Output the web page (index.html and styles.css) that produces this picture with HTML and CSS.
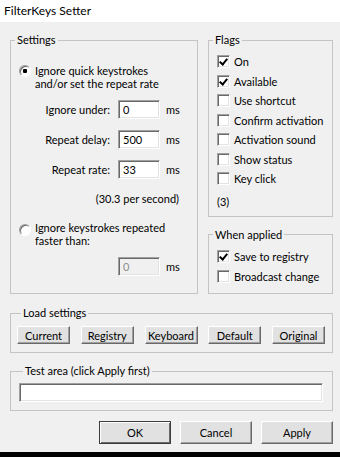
FILE: index.html
```html
<!DOCTYPE html>
<html lang="en">
<head>
    <meta charset="UTF-8">
    <title>FilterKeys Setter</title>
    <link rel="stylesheet" href="styles.css">
</head>
<body>
    <div class="titlebar">FilterKeys Setter</div>

    <div class="dialog">
        <div class="top">
            <fieldset class="group settings">
                <legend>Settings</legend>

                <div class="radio-row first">
                    <span class="radio on"></span>
                    <div class="radio-text">
                        <span class="line">Ignore quick keystrokes</span>
                        <span class="line">and/or set the repeat rate</span>
                    </div>
                </div>

                <div class="field-row under">
                    <span class="field-label">Ignore under:</span>
                    <input class="textbox" type="text" value="0">
                    <span>ms</span>
                </div>
                <div class="field-row">
                    <span class="field-label">Repeat delay:</span>
                    <input class="textbox" type="text" value="500">
                    <span>ms</span>
                </div>
                <div class="field-row">
                    <span class="field-label">Repeat rate:</span>
                    <input class="textbox" type="text" value="33">
                    <span>ms</span>
                </div>

                <div class="rate">(30.3 per second)</div>

                <div class="radio-row second">
                    <span class="radio"></span>
                    <div class="radio-text">
                        <span class="line">Ignore keystrokes repeated</span>
                        <span class="line">faster than:</span>
                    </div>
                </div>

                <div class="field-row bounce">
                    <span class="field-label"></span>
                    <input class="textbox" type="text" value="0" disabled>
                    <span>ms</span>
                </div>
            </fieldset>

            <div class="side">
                <fieldset class="group flags">
                    <legend>Flags</legend>
                    <div class="checks">
                        <div class="check"><span class="box on"></span>On</div>
                        <div class="check"><span class="box on"></span>Available</div>
                        <div class="check"><span class="box"></span>Use shortcut</div>
                        <div class="check"><span class="box"></span>Confirm activation</div>
                        <div class="check"><span class="box"></span>Activation sound</div>
                        <div class="check"><span class="box"></span>Show status</div>
                        <div class="check"><span class="box"></span>Key click</div>
                    </div>
                    <div class="count">(3)</div>
                </fieldset>

                <fieldset class="group applied">
                    <legend>When applied</legend>
                    <div class="check"><span class="box on"></span>Save to registry</div>
                    <div class="check"><span class="box"></span>Broadcast change</div>
                </fieldset>
            </div>
        </div>

        <fieldset class="group load">
            <legend>Load settings</legend>
            <div class="load-buttons">
                <button class="btn">Current</button>
                <button class="btn">Registry</button>
                <button class="btn">Keyboard</button>
                <button class="btn">Default</button>
                <button class="btn">Original</button>
            </div>
        </fieldset>

        <fieldset class="group test">
            <legend>Test area (click Apply first)</legend>
            <input class="textbox test-input" type="text">
        </fieldset>

        <div class="actions">
            <button class="btn big default">OK</button>
            <button class="btn big">Cancel</button>
            <button class="btn big">Apply</button>
        </div>
    </div>

    <div class="taskbar"></div>
</body>
</html>
```

FILE: styles.css
```css
body {
    margin: 0;
    width: 340px;
    height: 457px;
    overflow: hidden;
    display: flex;
    flex-direction: column;
    background-color: #f0f0f0;
    color: #000000;
    font-family: 'Lato', sans-serif;
    font-size: 11px;
}

.titlebar {
    height: 22px;
    line-height: 21px;
    padding-left: 4px;
    background-color: #ffffff;
    font-size: 12px;
}

.dialog {
    flex: 1;
    padding: 11px 7px 0 10px;
}

.top {
    display: flex;
    gap: 10px;
}

/* group boxes */
.group {
    margin: 0;
    padding: 0;
    min-width: 0;
    border: 1px solid #c4c4c4;
}
.group legend {
    margin-left: 4px;
    padding: 0 2px;
    line-height: 14px;
}

.settings {
    width: 188px;
    box-sizing: border-box;
    padding-bottom: 17px;
}
.side {
    width: 125px;
    display: flex;
    flex-direction: column;
    gap: 11px;
}

/* radio buttons */
.radio-row {
    display: flex;
    align-items: flex-start;
    gap: 4px;
    padding-left: 8px;
}
.radio-row.first {
    margin-top: 17px;
}
.radio-row.second {
    margin-top: 15px;
}
.radio-text .line {
    display: block;
    height: 13px;
    line-height: 13px;
}
.radio {
    width: 12px;
    height: 12px;
    box-sizing: border-box;
    border-radius: 50%;
    border: 1px solid #9a9a9a;
    border-bottom-color: #ffffff;
    border-right-color: #ffffff;
    box-shadow: inset 1px 1px 0 #6a6a6a;
    background: #ffffff;
    flex-shrink: 0;
}
.radio-row.first .radio {
    margin-top: 1px;
}
.radio-row.second .radio {
    margin-top: 3px;
}
.radio.on {
    background: radial-gradient(circle, #000000 0, #000000 2px, #ffffff 2.5px);
}

/* edit fields */
.field-row {
    display: flex;
    align-items: center;
    height: 19px;
    margin-top: 11px;
}
.field-row.under,
.field-row.bounce {
    margin-top: 10px;
}
.field-label {
    width: 99px;
    margin-right: 8px;
    text-align: right;
}
.textbox {
    box-sizing: border-box;
    width: 42px;
    height: 19px;
    margin: 0 6px 0 0;
    padding: 0 0 0 4px;
    font: inherit;
    color: #000000;
    background: #ffffff;
    border: 1px solid #a0a0a0;
    border-bottom-color: #ffffff;
    border-right-color: #ffffff;
    box-shadow: inset 1px 1px 0 #696969, inset -1px -1px 0 #e3e3e3;
    outline: none;
}
.textbox:disabled {
    background: #f0f0f0;
    color: #8d8d8d;
}

.rate {
    margin-top: 13px;
    padding-right: 18px;
    text-align: right;
    line-height: 14px;
}

/* check boxes */
.checks {
    margin-top: 5px;
}
.check {
    display: flex;
    align-items: center;
    gap: 4px;
    height: 19.5px;
    padding-left: 8px;
}
.box {
    width: 13px;
    height: 13px;
    box-sizing: border-box;
    border: 1px solid #a0a0a0;
    border-bottom-color: #ffffff;
    border-right-color: #ffffff;
    box-shadow: inset 1px 1px 0 #696969, inset -1px -1px 0 #e3e3e3;
    background: #ffffff;
    position: relative;
}
.box.on::after {
    content: "";
    position: absolute;
    left: 3px;
    top: 1px;
    width: 3px;
    height: 6px;
    border: solid #000000;
    border-width: 0 2px 2px 0;
    transform: rotate(40deg);
}
.count {
    margin-top: 6px;
    padding-left: 8px;
    line-height: 14px;
}
.flags {
    padding-bottom: 7px;
}

.applied {
    flex: 1;
    padding-top: 5px;
}
.applied .check {
    height: 20px;
}

/* load settings */
.load {
    margin-top: 12px;
    padding: 6px 7px 8px 6px;
}
.load-buttons {
    display: flex;
    justify-content: space-between;
}
.btn {
    box-sizing: border-box;
    width: 53px;
    height: 18px;
    padding: 0;
    font: inherit;
    color: #000000;
    background: #e1e1e1;
    border: 1px solid #ffffff;
    border-bottom-color: #696969;
    border-right-color: #696969;
    box-shadow: inset -1px -1px 0 #a0a0a0, inset 1px 1px 0 #e3e3e3;
}

/* test area */
.test {
    margin-top: 11px;
    padding: 5px 8px 8px;
}
.test-input {
    display: block;
    width: 304px;
    margin: 0;
}

/* dialog buttons */
.actions {
    display: flex;
    justify-content: flex-end;
    gap: 9px;
    margin-top: 10px;
}
.btn.big {
    width: 72px;
    height: 23px;
}
.btn.default {
    border-color: #3c3c3c;
    box-shadow: inset 1px 1px 0 #ffffff, inset -1px -1px 0 #696969;
}

.taskbar {
    height: 5px;
    background-color: #000000;
}
```
